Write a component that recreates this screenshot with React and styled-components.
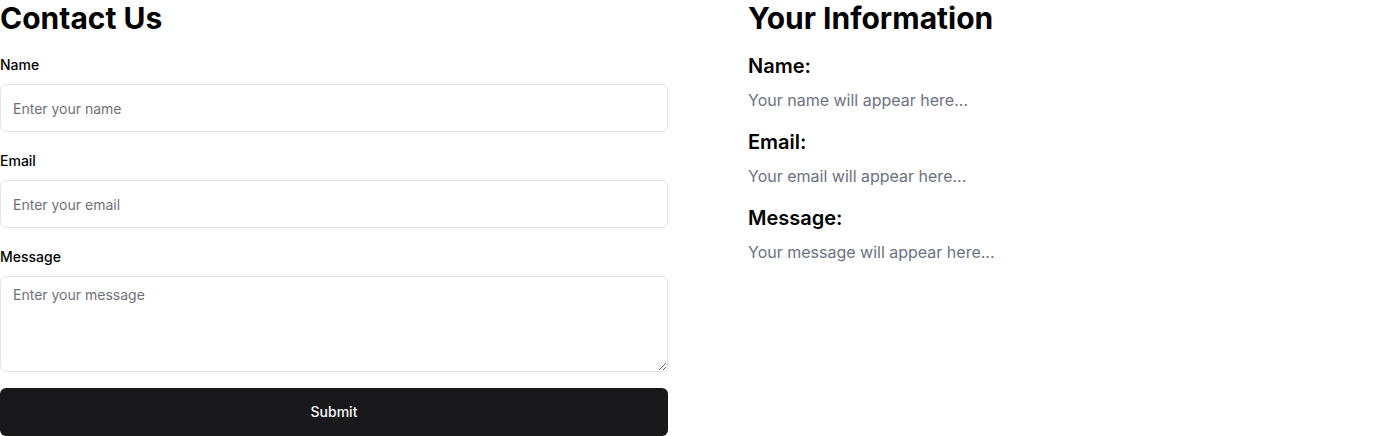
import React, { useState } from 'react';
import styled, { createGlobalStyle, css } from 'styled-components';

const GlobalStyle = createGlobalStyle`
  *, *::before, *::after { box-sizing: border-box; }
  body {
    margin: 0;
    background: #ffffff;
    color: #020203;
    font-family: Inter, sans-serif;
    font-size: 16px;
    line-height: 24px;
  }
`;

const Page = styled.main`
  display: grid;
  grid-template-columns: repeat(2, minmax(0, 1fr));
  column-gap: 40px;
`;

const Panel = styled.section`
  padding-left: ${({ $inset }) => ($inset ? '40px' : '0')};
`;

const Title = styled.h1`
  margin: 0 0 16px;
  font-size: 30px;
  font-weight: 700;
  line-height: 36px;
`;

const Form = styled.form`
  display: flex;
  flex-direction: column;
  gap: 16px;
`;

const Field = styled.div`
  width: 100%;
`;

const Label = styled.label`
  font-size: 14px;
  font-weight: 500;
  line-height: 14px;
`;

const control = css`
  display: block;
  width: 100%;
  margin: 8px 0 0;
  border: 1px solid #e4e4e7;
  border-radius: 6px;
  background: #ffffff;
  color: inherit;
  font-family: inherit;
  font-size: 14px;
  line-height: 20px;
  &::placeholder { color: #71717a; opacity: 1; }
`;

const Input = styled.input`
  ${control}
  height: 48px;
  padding: 8px 12px;
`;

const TextArea = styled.textarea`
  ${control}
  height: 96px;
  padding: 8px 12px;
  resize: vertical;
`;

const SubmitButton = styled.button`
  width: 100%;
  height: 48px;
  border: 0;
  border-radius: 6px;
  background: #18181b;
  color: #fafafa;
  font-family: inherit;
  font-size: 14px;
  font-weight: 500;
  line-height: 20px;
  cursor: pointer;
`;

const Details = styled.div`
  display: flex;
  flex-direction: column;
  gap: 16px;
`;

const DetailTitle = styled.h2`
  margin: 0 0 8px;
  font-size: 20px;
  font-weight: 600;
  line-height: 28px;
`;

const DetailText = styled.p`
  margin: 0;
  color: #6b7280;
  overflow-wrap: anywhere;
`;

const fields = [
  { id: 'name', label: 'Name', type: 'text' },
  { id: 'email', label: 'Email', type: 'email' },
  { id: 'message', label: 'Message', multiline: true },
];

export default function App() {
  const [values, setValues] = useState({ name: '', email: '', message: '' });
  const update = (event) =>
    setValues({ ...values, [event.target.name]: event.target.value });

  return (
    <>
      <GlobalStyle />
      <Page>
        <Panel>
          <Title>Contact Us</Title>
          <Form onSubmit={(event) => event.preventDefault()}>
            {fields.map(({ id, label, type, multiline }) => {
              const Control = multiline ? TextArea : Input;
              return (
                <Field key={id}>
                  <Label htmlFor={id}>{label}</Label>
                  <Control
                    id={id}
                    name={id}
                    type={type}
                    placeholder={`Enter your ${id}`}
                    value={values[id]}
                    onChange={update}
                  />
                </Field>
              );
            })}
            <SubmitButton type="submit">Submit</SubmitButton>
          </Form>
        </Panel>
        <Panel $inset>
          <Title>Your Information</Title>
          <Details>
            {fields.map(({ id, label }) => (
              <div key={id}>
                <DetailTitle>{label}:</DetailTitle>
                <DetailText>{values[id] || `Your ${id} will appear here...`}</DetailText>
              </div>
            ))}
          </Details>
        </Panel>
      </Page>
    </>
  );
}
